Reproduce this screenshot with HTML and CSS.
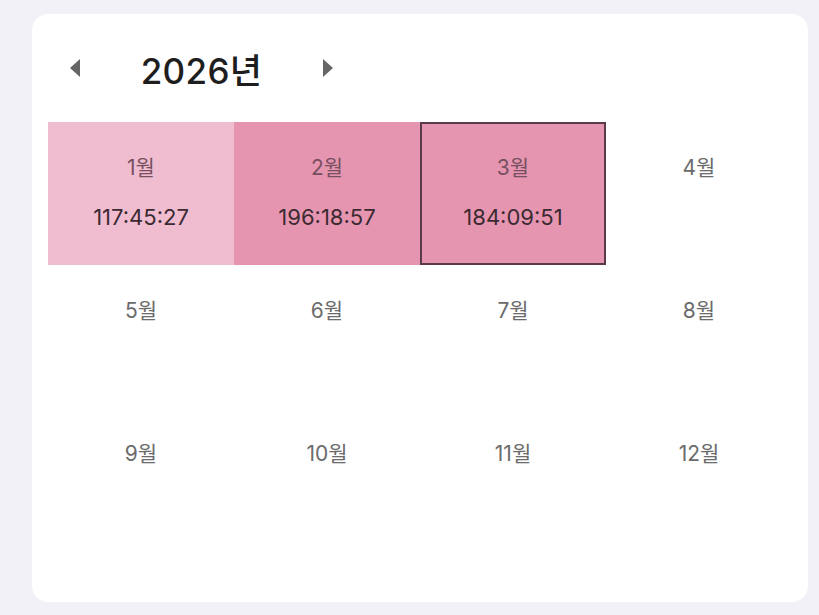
FILE: index.html
```html
<!DOCTYPE html>
<html lang="ko">
<head>
<meta charset="utf-8">
<link rel="stylesheet" href="styles.css">
</head>
<body>
<div class="card">
  <div class="header">
    <span class="arrow arrow-left"></span>
    <div class="title">2026년</div>
    <span class="arrow arrow-right"></span>
  </div>
  <div class="grid">
    <div class="cell level1"><div class="month">1월</div><div class="time">117:45:27</div></div>
    <div class="cell level2"><div class="month">2월</div><div class="time">196:18:57</div></div>
    <div class="cell level2 selected"><div class="month">3월</div><div class="time">184:09:51</div></div>
    <div class="cell"><div class="month">4월</div></div>
    <div class="cell"><div class="month">5월</div></div>
    <div class="cell"><div class="month">6월</div></div>
    <div class="cell"><div class="month">7월</div></div>
    <div class="cell"><div class="month">8월</div></div>
    <div class="cell"><div class="month">9월</div></div>
    <div class="cell"><div class="month">10월</div></div>
    <div class="cell"><div class="month">11월</div></div>
    <div class="cell"><div class="month">12월</div></div>
  </div>
</div>
</body>
</html>
```
FILE: styles.css
```css
html, body {
  margin: 0;
  padding: 0;
  background: #f2f1f7;
  font-family: Inter, "Noto Sans CJK KR", sans-serif;
}
body {
  padding: 14px 11px 13px 32px;
  height: 615px;
  box-sizing: border-box;
}
.card {
  background: #ffffff;
  border-radius: 16px;
  width: 776px;
  height: 588px;
  box-sizing: border-box;
  padding: 34px 16px 0 16px;
}
.header {
  display: flex;
  align-items: center;
  height: 40px;
  padding-left: 22px;
  margin-bottom: 34px;
}
.arrow {
  width: 0;
  height: 0;
  border-top: 9.5px solid transparent;
  border-bottom: 9.5px solid transparent;
}
.arrow-left {
  border-right: 10px solid #666666;
}
.arrow-right {
  border-left: 10px solid #666666;
}
.title {
  width: 243px;
  text-align: center;
  font-size: 35px;
  font-weight: 500;
  color: #1e1e1e;
  letter-spacing: 0.3px;
}
.grid {
  display: grid;
  grid-template-columns: repeat(4, 186px);
  grid-auto-rows: 143px;
}
.cell {
  box-sizing: border-box;
  padding-top: 34px;
  display: flex;
  flex-direction: column;
  align-items: center;
  gap: 25px;
}
.month {
  font-size: 21px;
  line-height: 24px;
  color: #6b6b6b;
}
.time {
  font-size: 22px;
  line-height: 24px;
  color: #3b2a31;
}
.level1 {
  background: #f0bcd0;
}
.level2 {
  background: #e695b0;
}
.level1 .month, .level2 .month {
  color: #77505f;
}
.selected {
  border: 2px solid #5a3a4b;
  padding-top: 32px;
}
```
